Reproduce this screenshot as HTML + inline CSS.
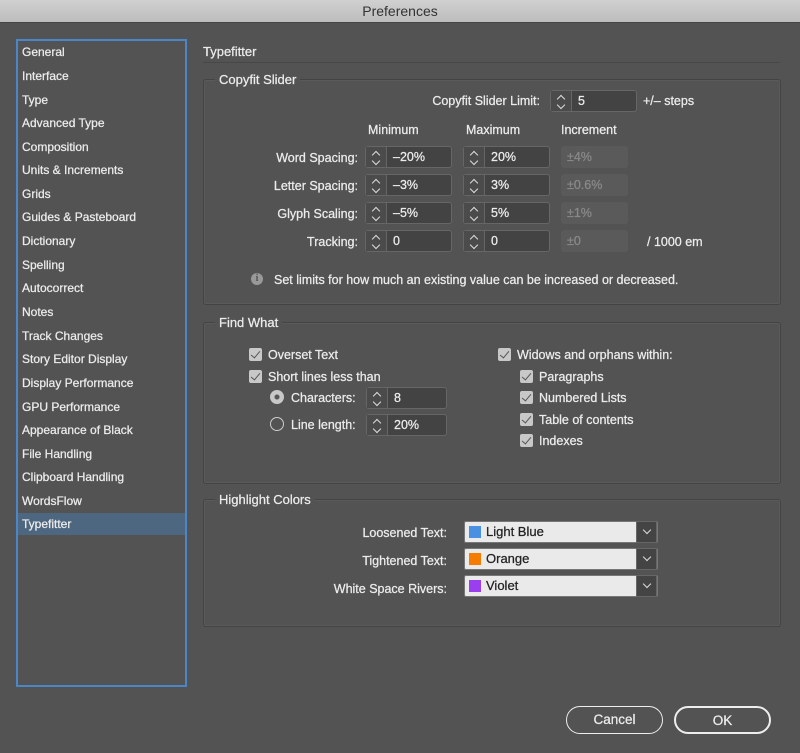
<!DOCTYPE html>
<html><head><meta charset="utf-8"><style>
*{margin:0;padding:0;box-sizing:border-box}
body{width:800px;height:753px;background:#535353;font-family:"Liberation Sans",sans-serif;font-size:12.5px;color:#ececec;position:relative;overflow:hidden;-webkit-text-stroke:0.25px}
.a{position:absolute;white-space:nowrap}
#tb{left:0;top:0;width:800px;height:23px;background:linear-gradient(#d0d0d0,#bdbdbd);color:#333;font-size:14px;text-align:center;line-height:23px;border-bottom:1px solid #444}
#side{left:16px;top:39px;width:171px;height:648px;border:2px solid #4b87c6}
.it{position:absolute;left:4px;height:22px;line-height:22px;font-size:12px}
.sel{left:0;width:167px;padding-left:4px;background:#4e6780}
.grp{position:absolute;border:1px solid #444;border-radius:3px;box-shadow:inset 0 0 0 1px #5a5a5a}
.gl{position:absolute;background:#535353;padding:0 4px;font-size:13px;top:-8px;left:11px;line-height:15px}
.r{text-align:right}
.st{position:absolute;height:22px;border:1px solid #666;border-radius:3px;background:#434343}
.st .s{position:absolute;left:0;top:0;width:21px;height:20px;border-right:1px solid #666;background:#4b4b4b}
.st .s:before{content:"";position:absolute;left:7px;top:5px;width:5px;height:5px;border-left:1.3px solid #ddd;border-top:1.3px solid #ddd;transform:rotate(45deg)}
.st .s:after{content:"";position:absolute;left:7px;top:11px;width:5px;height:5px;border-right:1.3px solid #ddd;border-bottom:1.3px solid #ddd;transform:rotate(45deg)}
.st .v{position:absolute;left:27px;top:0;line-height:20px}
.inc{position:absolute;width:67px;height:22px;background:#5a5a5a;border-radius:3px;color:#8a8a8a;padding-left:6px;line-height:22px}
.cb{position:absolute;width:13px;height:13px;background:#c8c8c8;border-radius:2px}
.cb:after{content:"";position:absolute;left:4px;top:1px;width:4px;height:8px;border-right:1.5px solid #555;border-bottom:1.5px solid #555;transform:rotate(40deg)}
.rd{position:absolute;width:14px;height:14px;border:1.3px solid #ccc;border-radius:50%}
.dd{position:absolute;left:464px;width:194px;height:22px;background:#eaeaea;border:1px solid #777;border-radius:2px;color:#222;font-size:13px}
.dd .sw{position:absolute;left:4px;top:4px;width:12px;height:12px}
.dd .t{position:absolute;left:21px;top:0;line-height:20px}
.dd .ar{position:absolute;right:0;top:-1px;width:21px;height:22px;background:#444;border:1px solid #666}
.dd .ar:after{content:"";position:absolute;left:7px;top:5px;width:5px;height:5px;border-right:1.3px solid #ddd;border-bottom:1.3px solid #ddd;transform:rotate(45deg)}
.btn{position:absolute;top:706px;width:97px;height:28px;border:1.5px solid #eee;border-radius:14px;text-align:center;line-height:25px;font-size:13.5px}
</style></head><body>
<div id="tb" class="a" style="-webkit-text-stroke:0">Preferences</div>
<div id="side" class="a">
<div class="it" style="top:0">General</div>
<div class="it" style="top:24px">Interface</div>
<div class="it" style="top:48px">Type</div>
<div class="it" style="top:71px">Advanced Type</div>
<div class="it" style="top:95px">Composition</div>
<div class="it" style="top:118px">Units &amp; Increments</div>
<div class="it" style="top:142px">Grids</div>
<div class="it" style="top:165px">Guides &amp; Pasteboard</div>
<div class="it" style="top:189px">Dictionary</div>
<div class="it" style="top:213px">Spelling</div>
<div class="it" style="top:236px">Autocorrect</div>
<div class="it" style="top:260px">Notes</div>
<div class="it" style="top:284px">Track Changes</div>
<div class="it" style="top:307px">Story Editor Display</div>
<div class="it" style="top:331px">Display Performance</div>
<div class="it" style="top:355px">GPU Performance</div>
<div class="it" style="top:378px">Appearance of Black</div>
<div class="it" style="top:402px">File Handling</div>
<div class="it" style="top:425px">Clipboard Handling</div>
<div class="it" style="top:449px">WordsFlow</div>
<div class="it sel" style="top:472px">Typefitter</div>
</div>

<div class="a" style="left:203px;top:44px;font-size:13px">Typefitter</div>
<div class="a" style="left:203px;top:62px;width:577px;height:1px;background:#474747"></div>

<div class="grp" style="left:203px;top:79px;width:578px;height:226px"><div class="gl">Copyfit Slider</div></div>
<div class="a r" style="left:380px;width:160px;top:94px">Copyfit Slider Limit:</div>
<div class="st" style="left:550px;top:90px;width:87px"><div class="s"></div><div class="v">5</div></div>
<div class="a" style="left:643px;top:94px">+/– steps</div>
<div class="a" style="left:368px;top:123px">Minimum</div>
<div class="a" style="left:466px;top:123px">Maximum</div>
<div class="a" style="left:561px;top:123px">Increment</div>

<div class="a r" style="left:200px;width:158px;top:151px">Word Spacing:</div>
<div class="st" style="left:365px;top:146px;width:87px"><div class="s"></div><div class="v">–20%</div></div>
<div class="st" style="left:463px;top:146px;width:87px"><div class="s"></div><div class="v">20%</div></div>
<div class="inc" style="left:561px;top:146px">±4%</div>

<div class="a r" style="left:200px;width:158px;top:179px">Letter Spacing:</div>
<div class="st" style="left:365px;top:174px;width:87px"><div class="s"></div><div class="v">–3%</div></div>
<div class="st" style="left:463px;top:174px;width:87px"><div class="s"></div><div class="v">3%</div></div>
<div class="inc" style="left:561px;top:174px">±0.6%</div>

<div class="a r" style="left:200px;width:158px;top:207px">Glyph Scaling:</div>
<div class="st" style="left:365px;top:202px;width:87px"><div class="s"></div><div class="v">–5%</div></div>
<div class="st" style="left:463px;top:202px;width:87px"><div class="s"></div><div class="v">5%</div></div>
<div class="inc" style="left:561px;top:202px">±1%</div>

<div class="a r" style="left:200px;width:158px;top:235px">Tracking:</div>
<div class="st" style="left:365px;top:230px;width:87px"><div class="s"></div><div class="v">0</div></div>
<div class="st" style="left:463px;top:230px;width:87px"><div class="s"></div><div class="v">0</div></div>
<div class="inc" style="left:561px;top:230px">±0</div>
<div class="a" style="left:647px;top:235px">/ 1000 em</div>

<div class="a" style="left:251px;top:273px;width:12px;height:12px;border-radius:50%;background:#999;color:#535353;font-size:10px;font-weight:bold;text-align:center;line-height:12px;-webkit-text-stroke:0;font-family:'Liberation Serif',serif">i</div>
<div class="a" style="left:274px;top:273px">Set limits for how much an existing value can be increased or decreased.</div>

<div class="grp" style="left:203px;top:322px;width:578px;height:162px"><div class="gl">Find What</div></div>
<div class="cb" style="left:249px;top:348px"></div><div class="a" style="left:268px;top:348px">Overset Text</div>
<div class="cb" style="left:249px;top:370px"></div><div class="a" style="left:268px;top:370px">Short lines less than</div>
<div class="rd" style="left:270px;top:390px;background:radial-gradient(#555 2px,#c8c8c8 3px);border-color:#c8c8c8"></div><div class="a" style="left:291px;top:391px">Characters:</div>
<div class="st" style="left:366px;top:387px;width:81px"><div class="s"></div><div class="v">8</div></div>
<div class="rd" style="left:270px;top:417px"></div><div class="a" style="left:291px;top:418px">Line length:</div>
<div class="st" style="left:366px;top:414px;width:81px"><div class="s"></div><div class="v">20%</div></div>
<div class="cb" style="left:498px;top:348px"></div><div class="a" style="left:517px;top:348px">Widows and orphans within:</div>
<div class="cb" style="left:520px;top:370px"></div><div class="a" style="left:539px;top:370px">Paragraphs</div>
<div class="cb" style="left:520px;top:391px"></div><div class="a" style="left:539px;top:391px">Numbered Lists</div>
<div class="cb" style="left:520px;top:413px"></div><div class="a" style="left:539px;top:413px">Table of contents</div>
<div class="cb" style="left:520px;top:434px"></div><div class="a" style="left:539px;top:434px">Indexes</div>

<div class="grp" style="left:203px;top:499px;width:578px;height:128px"><div class="gl">Highlight Colors</div></div>
<div class="a r" style="left:250px;width:197px;top:526px">Loosened Text:</div>
<div class="dd" style="top:521px"><div class="sw" style="background:#4a90e2"></div><div class="t">Light Blue</div><div class="ar"></div></div>
<div class="a r" style="left:250px;width:197px;top:554px">Tightened Text:</div>
<div class="dd" style="top:548px"><div class="sw" style="background:#f57c00"></div><div class="t">Orange</div><div class="ar"></div></div>
<div class="a r" style="left:250px;width:197px;top:582px">White Space Rivers:</div>
<div class="dd" style="top:575px"><div class="sw" style="background:#9b3ef0"></div><div class="t">Violet</div><div class="ar"></div></div>

<div class="btn" style="left:566px">Cancel</div>
<div class="btn" style="left:674px;border-width:2px">OK</div>
</body></html>
